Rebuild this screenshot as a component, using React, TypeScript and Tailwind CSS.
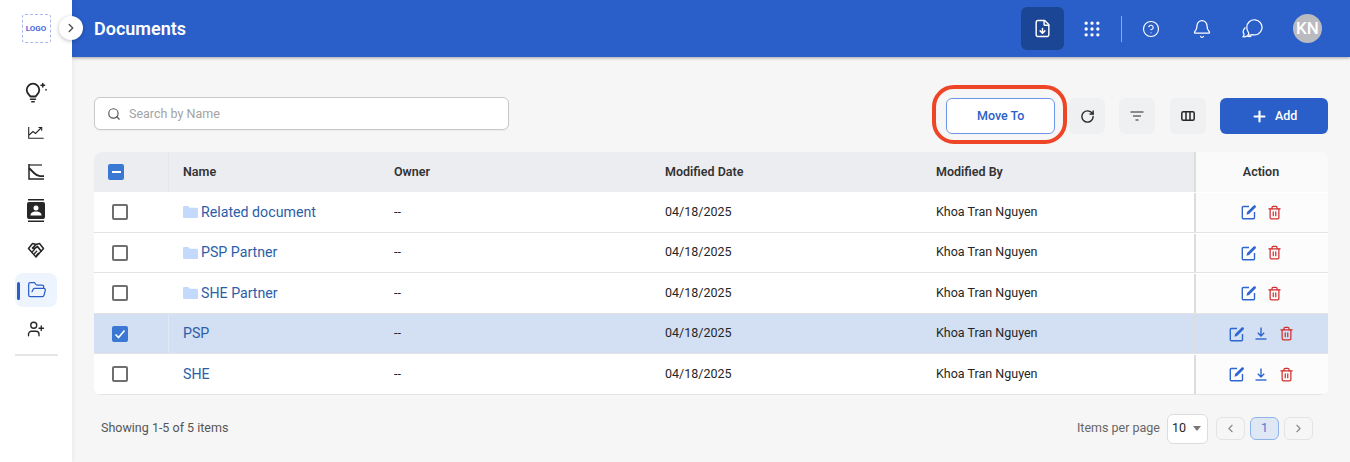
import React from 'react';
import {
  ChevronLeft,
  ChevronRight,
  Bell,
  CircleHelp,
  FileDown,
  FolderOpen,
  Plus,
  RotateCw,
  Search,
  Trash2,
  UserPlus,
  Grip,
} from 'lucide-react';

const cols = 'grid grid-cols-[75px_211px_271px_271px_272px_134px]';

const rows = [
  { name: 'Related document', folder: true },
  { name: 'PSP Partner', folder: true },
  { name: 'SHE Partner', folder: true },
  { name: 'PSP', selected: true, download: true },
  { name: 'SHE', download: true },
];

function BulbIcon() {
  return (
    <svg width="24" height="24" viewBox="-1 -1 24 24" fill="none" stroke="#262626" strokeWidth="1.800" strokeLinecap="round">
      <path d="M5.500 18.200h5M6.800 20.800h2.400" strokeWidth="1.500" />
      <path d="M5.500 15.500c-.2-1-3.800-2.200-3.800-6.500a6.300 6.300 0 0 1 12.600 0c0 4.300-3.600 5.500-3.800 6.500z" />
      <path d="M17.800 2.500v3.500M16 4.200h3.600M21 8.500v.5" strokeWidth="1.500" />
    </svg>
  );
}

function ChartIcon() {
  return (
    <svg width="16" height="14" viewBox="0 0 16 14" fill="none" stroke="#262626" strokeWidth="1.100">
      <path d="M0.700 2v11.200h15" />
      <path d="M1 10l4-3.500 2.500 2L13 3" />
      <path d="M10.500 2.500h3.200v3.200" />
    </svg>
  );
}

function DeclineIcon() {
  return (
    <svg width="16" height="16" viewBox="0 0 16 16" fill="none" stroke="#262626" strokeWidth="1.500">
      <path d="M1 0v15h15" />
      <path d="M1 1h13" strokeWidth="1.200" />
      <path d="M1 4l5 5c2 2 4 3 6 3.200h4" strokeWidth="1.800" />
    </svg>
  );
}

function ContactIcon() {
  return (
    <svg width="20" height="23" viewBox="0 0 20 23" fill="#262626">
      <rect x="2" y="0" width="16" height="1.500" />
      <rect x="2" y="21.500" width="16" height="1.500" />
      <rect x="1" y="3" width="18" height="17" rx="2" />
      <circle cx="10" cy="9" r="2.500" fill="#fff" />
      <path d="M4.500 16.500c0-3 2.500-4 5.500-4s5.500 1 5.500 4z" fill="#fff" />
    </svg>
  );
}

function HandshakeIcon() {
  return (
    <svg width="18" height="18" viewBox="0 0 18 18" fill="none" stroke="#262626" strokeWidth="1.500" strokeLinejoin="round" strokeLinecap="round">
      <path d="M1.500 7.500L5.500 2.500l3.500 1 3.500-1 4 5L9 16z" />
      <path d="M9 3.500L5.500 7c1 1 2 .8 3.200-.3l1.800-1.200 3.500 4.500" strokeWidth="1.700" />
      <path d="M5.500 10.500l2-2M7.500 12.500l2.200-2.200M9.500 14.200l2-2" strokeWidth="1.400" />
    </svg>
  );
}

function ChatIcon() {
  return (
    <svg width="21" height="19" viewBox="0 0 22 20" fill="none" stroke="#fff" strokeWidth="1.300" className="ml-[30px]">
      <path d="M5 9a8 8 0 1 1 5.500 7.400c-1.300.6-2.600.8-4.200.5.800-.8.900-1.600.5-2.500C5.700 13 5 11.200 5 9z" />
      <path d="M3.500 9C1.300 11 .600 13.700 2 15.800c.2.800-.1 1.700-1 2.900 1.700.3 3.200-.1 4.300-.8 1.300.7 3 .7 4.500.2" />
    </svg>
  );
}

function EditIcon() {
  return (
    <svg width="16" height="16" viewBox="0 0 16 16" fill="none" className="shrink-0">
      <path d="M8 2.500H2.300A1 1 0 0 0 1.300 3.500v10.200a1 1 0 0 0 1 1h10.200a1 1 0 0 0 1-1V8" stroke="#2f66cf" strokeWidth="1.400" />
      <path d="M5.500 10.800l.6-2.700L12.700 1.500c.5-.5 1.200-.5 1.700 0l.2.200c.5.500.5 1.200 0 1.700L8 10z" fill="#2f66cf" />
    </svg>
  );
}

function DownloadIcon() {
  return (
    <svg width="12" height="13" viewBox="0 0 12 13" fill="none" stroke="#2f66cf" strokeWidth="1.400" className="shrink-0">
      <path d="M6 0.500v8M2.800 5.800L6 9l3.200-3.200" />
      <path d="M0.500 12h11" />
    </svg>
  );
}

function Checkbox({ state }: { state?: 'checked' | 'mixed' }) {
  if (state) {
    return (
      <span className="w-4 h-4 rounded-[2px] bg-[#3b78d4] flex items-center justify-center">
        {state === 'mixed' ? (
          <span className="w-[9px] h-[2px] bg-white" />
        ) : (
          <svg width="12" height="12" viewBox="0 0 12 12" fill="none" stroke="#fff" strokeWidth="1.600">
            <path d="M1.500 6.500l3 3 6-7" />
          </svg>
        )}
      </span>
    );
  }
  return <span className="w-4 h-4 rounded-[2px] border-2 border-[#6f6f6f] bg-white" />;
}

function FolderIcon() {
  return (
    <svg width="15" height="12" viewBox="0 0 15 12" className="shrink-0">
      <path d="M0 1.200C0 .5.500 0 1.200 0h4l1.500 1.700h7c.7 0 1.300.6 1.300 1.300v7.700c0 .7-.6 1.300-1.300 1.300H1.200C.5 12 0 11.400 0 10.700z" fill="#c3dafc" />
    </svg>
  );
}

function ToolButton({ children }: { children: React.ReactNode }) {
  return <button className="w-9 h-9 rounded-md bg-[#eff0f2] flex items-center justify-center text-[#262626]">{children}</button>;
}

export default function App() {
  return (
    <div className="w-[1350px] h-[462px] overflow-hidden flex bg-[#f6f6f6] text-[#262626] font-['Roboto',sans-serif]">
      {/* Sidebar */}
      <aside className="relative z-10 w-[72px] shrink-0 bg-white shadow-[0_0_6px_rgba(0,0,0,0.08)] flex flex-col items-center">
        <div className="mt-[14px] w-[29px] h-[29px] rounded-[3px] border border-dashed border-[#a9b9ee] flex items-center justify-center text-[8px] font-bold text-[#4a67d8]">
          LOGO
        </div>
        <button className="absolute left-[59px] top-[16px] w-6 h-6 rounded-full bg-white shadow-[0_1px_4px_rgba(0,0,0,0.25)] flex items-center justify-center text-[#555]">
          <ChevronRight size={14} strokeWidth={2.500} />
        </button>
        <nav className="mt-[29px] w-full flex flex-col items-center">
          <div className="h-[40px] flex items-center justify-center"><BulbIcon /></div>
          <div className="h-[40px] flex items-center justify-center"><ChartIcon /></div>
          <div className="h-[39px] flex items-center justify-center"><DeclineIcon /></div>
          <div className="h-[39px] flex items-center justify-center"><ContactIcon /></div>
          <div className="h-[39px] flex items-center justify-center"><HandshakeIcon /></div>
          <div className="relative w-[42px] h-[34px] mt-[4px] rounded-lg bg-[#edf4fe] flex items-center justify-center pl-[1px] text-[#2a5fc9]">
            <span className="absolute left-[2px] top-[9px] w-[3px] h-[18px] rounded-sm bg-[#2a5fc9]" />
            <FolderOpen size={20} strokeWidth={1.500} />
          </div>
          <div className="h-[44px] flex items-center justify-center"><UserPlus size={18} color="#262626" strokeWidth={1.800} /></div>
          <div className="mt-[3px] w-[43px] h-[2px] bg-[#e6e6e6]" />
        </nav>
      </aside>

      <div className="flex-1 min-w-0 flex flex-col">
        {/* Header */}
        <header className="h-[57px] shrink-0 bg-[#2a5fc9] shadow-[0_1px_3px_rgba(0,0,0,0.35)] pl-[22px] pr-[28px] flex items-center text-white">
          <h1 className="text-[18px] font-semibold">Documents</h1>
          <div className="ml-auto flex items-center">
            <button className="w-[43px] h-[43px] rounded-md bg-[#1b4695] flex items-center justify-center">
              <FileDown size={19} strokeWidth={1.800} />
            </button>
            <Grip size={20} strokeWidth={2} className="ml-[18px]" />
            <span className="ml-[19px] w-px h-[26px] bg-[#8fa9e0]" />
            <CircleHelp size={18} strokeWidth={1.500} className="ml-[20px]" />
            <Bell size={20} strokeWidth={1.500} className="ml-[32px]" />
            <ChatIcon />
            <span className="ml-[30px] w-[29px] h-[29px] rounded-full bg-[#b9bbc0] flex items-center justify-center text-[17px] font-medium">KN</span>
          </div>
        </header>

        <main className="flex-1 min-h-0 pl-[22px] pr-[22px] pt-[40px]">
          {/* Toolbar */}
          <div className="flex items-start h-[55px]">
            <div className="w-[416px] h-[33px] rounded-md border border-[#c9c9c9] bg-white flex items-center pl-[12px] gap-[8px] shadow-[0_1px_1px_rgba(0,0,0,0.04)]">
              <Search size={14} color="#555" strokeWidth={2} />
              <span className="mt-px text-[12.500px] text-[#a3a3a3]">Search by Name</span>
            </div>
            <div className="relative ml-[437px] mt-[1px]">
              <button className="w-[109px] h-9 rounded-md border border-[#6d97e6] bg-white text-[12.500px] font-medium text-[#2a5fc9]">Move To</button>
              <span className="absolute -left-[14px] -top-[13px] w-[135px] h-[59px] rounded-[22px] border-[4.500px] border-[#ee4526]" />
            </div>
            <div className="ml-[14px] mt-[1px] flex items-center">
              <ToolButton><RotateCw size={15} strokeWidth={2.200} /></ToolButton>
              <span className="w-[14px]" />
              <ToolButton>
                <svg width="14" height="10" viewBox="0 0 14 10" fill="none" stroke="#262626" strokeWidth="1.200">
                  <path d="M0.500 1h13M3 5h8M5.500 9h3" />
                </svg>
              </ToolButton>
              <span className="w-[15px]" />
              <ToolButton>
                <svg width="14" height="10" viewBox="0 0 14 10" fill="none" stroke="#262626" strokeWidth="1.500">
                  <rect x="0.800" y="0.800" width="12.400" height="8.400" rx="1.500" />
                  <path d="M5 1v8M9 1v8" />
                </svg>
              </ToolButton>
            </div>
            <button className="ml-[14px] mt-[1px] w-[108px] h-9 rounded-md bg-[#2a5fc9] text-white text-[12.500px] font-medium flex items-center justify-center gap-[7px]">
              <Plus size={17} strokeWidth={3} />
              Add
            </button>
          </div>

          {/* Table */}
          <div className="w-[1234px] rounded-lg overflow-hidden bg-white">
            <div className={`${cols} h-10 bg-[#ecedf1] text-[12.500px] font-semibold text-[#333]`}>
              <div className="pl-[14px] flex items-center border-r border-[#e6e7ec]"><Checkbox state="mixed" /></div>
              <div className="pl-[14px] flex items-center">Name</div>
              <div className="pl-[14px] flex items-center">Owner</div>
              <div className="pl-[14px] flex items-center">Modified Date</div>
              <div className="pl-[14px] flex items-center">Modified By</div>
              <div className="bg-[#fafafa] border-l-2 border-[#dddddd] pr-[2px] flex items-center justify-center">Action</div>
            </div>
            {rows.map((row) => (
              <div
                key={row.name}
                className={`${cols} h-[40.500px] pt-px text-[12.500px] border-b border-[#e3e3e3] ${row.selected ? 'bg-[#d3dff3]' : 'bg-white'}`}
              >
                <div className={`pl-[18px] flex items-center ${row.selected ? 'border-r border-[#e0e8f6]' : ''}`}>
                  <Checkbox state={row.selected ? 'checked' : undefined} />
                </div>
                <div className="pl-[14px] flex items-center gap-[3px] text-[14.200px] text-[#2b5ea8]">
                  {row.folder && <FolderIcon />}
                  {row.name}
                </div>
                <div className="pl-[14px] flex items-center">--</div>
                <div className="pl-[14px] flex items-center">04/18/2025</div>
                <div className="pl-[14px] flex items-center">Khoa Tran Nguyen</div>
                <div className={`border-l-2 border-[#dddddd] pr-[2px] flex items-center justify-center gap-[10px] ${row.selected ? '' : 'bg-[#fcfcfc]'}`}>
                  <EditIcon />
                  {row.download && <DownloadIcon />}
                  <Trash2 size={15} color="#d2302f" strokeWidth={2} className={row.download ? 'ml-[2px]' : ''} />
                </div>
              </div>
            ))}
          </div>

          {/* Footer */}
          <div className="mt-[19px] pl-[7px] pr-[15px] flex items-center text-[12.500px]">
            <span className="text-[#555]">Showing 1-5 of 5 items</span>
            <span className="ml-auto text-[#666]">Items per page</span>
            <div className="ml-[7px] w-[41px] h-[30px] rounded-md border border-[#dcdcdc] bg-white flex items-center pl-[4px] gap-[7px]">
              <span>10</span>
              <span className="w-0 h-0 border-x-[4.500px] border-x-transparent border-t-[5px] border-t-[#777]" />
            </div>
            <button className="ml-[8px] w-[29px] h-[23px] rounded-md border border-[#e3e3e3] flex items-center justify-center text-[#888]"><ChevronLeft size={13} /></button>
            <button className="ml-[5px] w-[29px] h-[23px] rounded-md border border-[#8fb2ea] bg-[#dfe7f5] flex items-center justify-center text-[#4a7bd0]">1</button>
            <button className="ml-[5px] w-[29px] h-[23px] rounded-md border border-[#e3e3e3] flex items-center justify-center text-[#888]"><ChevronRight size={13} /></button>
          </div>
        </main>
      </div>
    </div>
  );
}
